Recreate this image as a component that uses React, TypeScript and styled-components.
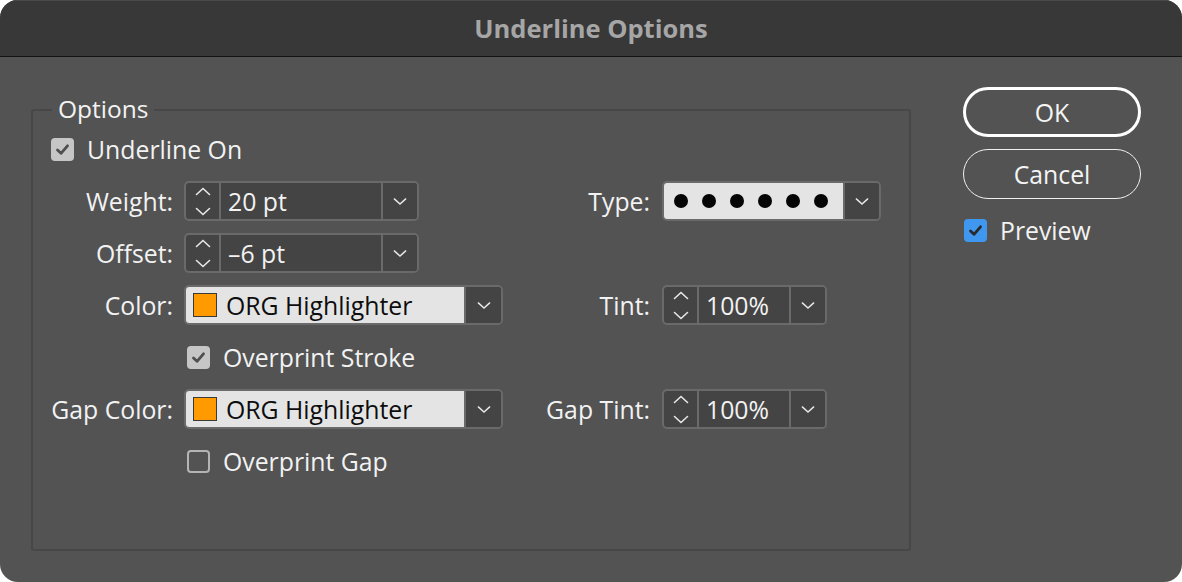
import React from "react";
import styled, { createGlobalStyle } from "styled-components";

const FONT = `"Open Sans", Lato, sans-serif`;
const FS = "24.8px";

const Global = createGlobalStyle`
  html, body { margin: 0; padding: 0; background: #ffffff; }
  body { font-family: ${FONT}; }
  * { box-sizing: border-box; }
`;

const Window = styled.div`
  width: 1182px;
  height: 582px;
  border-radius: 18px;
  overflow: hidden;
  background: #535353;
  display: flex;
  flex-direction: column;
  font-family: ${FONT};
`;

const TitleBar = styled.div`
  height: 57px;
  flex: none;
  background: #383838;
  border-top: 1px solid #4a4a4a;
  border-bottom: 1px solid #141414;
  display: flex;
  align-items: center;
  justify-content: center;
  color: #a6a6a6;
  font-weight: 700;
  font-size: 25.5px;
  padding-bottom: 2px;
`;

const Body = styled.div`
  flex: 1;
  display: flex;
  align-items: flex-start;
  padding: 30px 41px 31px 31px;
  gap: 52px;
`;

const Group = styled.fieldset`
  margin: 9px 0 0 0;
  width: 880px;
  height: 455px;
  border: 2px solid #474747;
  border-radius: 3px;
  padding: 5px 0 0 0;
  min-width: 0;
`;

const Legend = styled.legend`
  margin-left: 19px;
  padding: 0 6px 3px 6px;
  height: 28px;
  line-height: 25px;
  font-size: 24.5px;
  color: #f2f2f2;
`;

const Form = styled.div`
  display: grid;
  grid-template-columns: 151px 340px 138px 1fr;
  grid-auto-rows: 40px;
  row-gap: 12px;
  align-items: center;
`;

const Label = styled.div<{ $pad?: number }>`
  text-align: right;
  padding-right: ${(p) => p.$pad ?? 11}px;
  color: #f2f2f2;
  font-size: ${FS};
  white-space: nowrap;
`;

const Empty = styled.div``;

const CheckRow = styled.label<{ $indent: number; $span?: string }>`
  display: flex;
  align-items: center;
  gap: 13px;
  padding-left: ${(p) => p.$indent}px;
  grid-column: ${(p) => p.$span ?? "auto"};
  color: #f2f2f2;
  font-size: ${FS};
  white-space: nowrap;
`;

const Box = styled.span<{ $variant: "gray" | "blue" | "off" }>`
  width: 23px;
  height: 23px;
  border-radius: 4px;
  flex: none;
  display: flex;
  align-items: center;
  justify-content: center;
  background: ${(p) =>
    p.$variant === "gray" ? "#c6c6c6" : p.$variant === "blue" ? "#3f97f0" : "transparent"};
  border: ${(p) => (p.$variant === "off" ? "2px solid #b4b4b4" : "none")};
`;

const Check = ({ color }: { color: string }) => (
  <svg width="17" height="17" viewBox="0 0 17 17">
    <path d="M3.5 9 L7 12.3 L13.5 4.8" fill="none" stroke={color} strokeWidth="2.8" strokeLinecap="round" strokeLinejoin="round" />
  </svg>
);

const Field = styled.div<{ $w: number }>`
  width: ${(p) => p.$w}px;
  height: 40px;
  display: flex;
  border: 2px solid #6a6a6a;
  border-radius: 5px;
  background: #444444;
  overflow: hidden;
`;

const Spinner = styled.div`
  width: 35px;
  flex: none;
  border-right: 2px solid #6a6a6a;
  display: flex;
  flex-direction: column;
  align-items: center;
  justify-content: center;
  gap: 11px;
`;

const Value = styled.div<{ $light?: boolean; $pad?: number }>`
  flex: 1;
  display: flex;
  align-items: center;
  gap: 9px;
  padding-left: ${(p) => p.$pad ?? 7}px;
  background: ${(p) => (p.$light ? "#e4e4e4" : "#444444")};
  color: ${(p) => (p.$light ? "#0d0d0d" : "#f2f2f2")};
  font-size: ${FS};
  white-space: nowrap;
`;

const Drop = styled.div<{ $w: number }>`
  width: ${(p) => p.$w}px;
  flex: none;
  border-left: 2px solid #6a6a6a;
  display: flex;
  align-items: center;
  justify-content: center;
  background: #444444;
`;

const Swatch = styled.span`
  width: 24px;
  height: 24px;
  background: #ff9a00;
  border: 1.5px solid #3a3a3a;
  flex: none;
`;

const Dots = styled.div`
  flex: 1;
  display: flex;
  align-items: center;
  gap: 14px;
  padding-left: 10px;
  background: #e4e4e4;
`;

const Dot = styled.span`
  width: 14px;
  height: 14px;
  border-radius: 50%;
  background: #050505;
`;

const Side = styled.div`
  width: 178px;
  display: flex;
  flex-direction: column;
`;

const Button = styled.button<{ $primary?: boolean }>`
  height: 50px;
  border-radius: 25px;
  background: transparent;
  border: ${(p) => (p.$primary ? "3px solid #ffffff" : "1.5px solid #f0f0f0")};
  color: #f4f4f4;
  font-family: ${FONT};
  font-size: ${FS};
  padding: 0;
  margin-bottom: ${(p) => (p.$primary ? 12 : 14)}px;
`;

const ChevUp = () => (
  <svg width="16" height="9" viewBox="0 0 16 9">
    <path d="M1.5 7.5 L8 1.5 L14.5 7.5" fill="none" stroke="#e8e8e8" strokeWidth="1.6" strokeLinecap="round" />
  </svg>
);
const ChevDown = ({ w = 16 }: { w?: number }) => (
  <svg width={w} height="9" viewBox="0 0 16 9">
    <path d="M1.5 1.5 L8 7.5 L14.5 1.5" fill="none" stroke="#e8e8e8" strokeWidth="1.6" strokeLinecap="round" />
  </svg>
);

const NumberField = ({ w, value, dropW }: { w: number; value: string; dropW: number }) => (
  <Field $w={w}>
    <Spinner>
      <ChevUp />
      <ChevDown />
    </Spinner>
    <Value>{value}</Value>
    <Drop $w={dropW}>
      <ChevDown w={14} />
    </Drop>
  </Field>
);

const ColorField = () => (
  <Field $w={319}>
    <Value $light $pad={7}>
      <Swatch />
      ORG Highlighter
    </Value>
    <Drop $w={37}>
      <ChevDown w={14} />
    </Drop>
  </Field>
);

export default function App() {
  return (
    <>
      <Global />
      <Window>
        <TitleBar>Underline Options</TitleBar>
        <Body>
          <Group>
            <Legend>Options</Legend>
            <Form>
              <CheckRow $indent={18} $span="1 / -1">
                <Box $variant="gray">
                  <Check color="#4e4e4e" />
                </Box>
                Underline On
              </CheckRow>

              <Label>Weight:</Label>
              <NumberField w={235} value="20 pt" dropW={36} />
              <Label $pad={12}>Type:</Label>
              <Field $w={219}>
                <Dots>
                  {[0, 1, 2, 3, 4, 5].map((i) => (
                    <Dot key={i} />
                  ))}
                </Dots>
                <Drop $w={36}>
                  <ChevDown w={14} />
                </Drop>
              </Field>

              <Label>Offset:</Label>
              <NumberField w={235} value="–6 pt" dropW={36} />
              <Empty />
              <Empty />

              <Label>Color:</Label>
              <ColorField />
              <Label $pad={12}>Tint:</Label>
              <NumberField w={165} value="100%" dropW={36} />

              <Empty />
              <CheckRow $indent={3} $span="2 / -1">
                <Box $variant="gray">
                  <Check color="#4e4e4e" />
                </Box>
                Overprint Stroke
              </CheckRow>

              <Label>Gap Color:</Label>
              <ColorField />
              <Label $pad={12}>Gap Tint:</Label>
              <NumberField w={165} value="100%" dropW={36} />

              <Empty />
              <CheckRow $indent={3} $span="2 / -1">
                <Box $variant="off" />
                Overprint Gap
              </CheckRow>
            </Form>
          </Group>
          <Side>
            <Button $primary>OK</Button>
            <Button>Cancel</Button>
            <CheckRow $indent={1}>
              <Box $variant="blue">
                <Check color="#2a2a2a" />
              </Box>
              Preview
            </CheckRow>
          </Side>
        </Body>
      </Window>
    </>
  );
}
